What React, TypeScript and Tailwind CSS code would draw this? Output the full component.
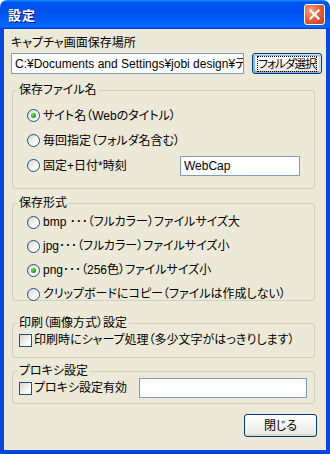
import type { ReactNode } from 'react'

function Radio({ checked }: { checked?: boolean }) {
  return (
    <span className="flex h-[13px] w-[13px] shrink-0 items-center justify-center rounded-full border border-[#1C5180] bg-[linear-gradient(135deg,#d8d5ca,#ffffff_75%)]">
      {checked && (
        <span className="h-[5px] w-[5px] rounded-full bg-[radial-gradient(circle_at_35%_35%,#6be46b,#21a121_60%,#137a13)]" />
      )}
    </span>
  )
}

function Check() {
  return (
    <span className="h-[13px] w-[13px] shrink-0 border border-[#1C5180] bg-[linear-gradient(135deg,#d8d5ca,#ffffff_80%)]" />
  )
}

type GroupProps = {
  title: string
  className: string
  children: ReactNode
}

function Group({ title, className, children }: GroupProps) {
  return (
    <div className={`relative ml-[8px] w-[303px] rounded-[3px] border border-[#D0D0BF] ${className}`}>
      <span className="absolute -top-[8px] left-[4px] bg-[#ECE9D8] px-[2px] leading-[14px]">{title}</span>
      {children}
    </div>
  )
}

function RadioRow({ label, checked, h }: { label: string; checked?: boolean; h: string }) {
  return (
    <div className={`flex items-center gap-[3px] pl-[14px] ${h}`}>
      <Radio checked={checked} />
      <span className="whitespace-nowrap leading-[14px]">{label}</span>
    </div>
  )
}

function XpButton({ label, focused, className }: { label: string; focused?: boolean; className: string }) {
  return (
    <div
      className={`flex items-center justify-center overflow-hidden rounded-[3px] border border-[#003C74] bg-[linear-gradient(180deg,#ffffff,#ecebe6_86%,#d6d0c5)] ${
        focused
          ? 'shadow-[inset_-1px_1px_#cee7ff,inset_1px_2px_#98b8ea,inset_-2px_2px_#bcd4f6,inset_1px_-1px_#89ade4,inset_2px_-2px_#89ade4]'
          : ''
      } ${className}`}
    >
      <span
        className={`whitespace-nowrap leading-[14px] ${
          focused ? 'border border-dotted border-black text-[11.5px] tracking-[-0.9px]' : ''
        }`}
      >
        {label}
      </span>
    </div>
  )
}

export default function App() {
  return (
    <div className="flex h-[454px] w-[330px] flex-col font-['Liberation_Sans','Noto_Sans_CJK_JP',sans-serif] text-[12px] text-black [font-feature-settings:'palt']">
      {/* title bar */}
      <div className="flex h-[29px] items-center justify-between rounded-t-[7px] bg-[linear-gradient(180deg,#0997ff,#0053ee_8%,#0050ee_40%,#0066ff_88%,#0066ff_93%,#005bff_95%,#003dd7_96%,#003dd7)] pl-[8px] pr-[5px]">
        <span className="font-['Noto_Sans_CJK_JP',sans-serif] text-[13px] font-bold tracking-[1px] text-white [text-shadow:1px_1px_#0f1089]">
          設定
        </span>
        <div className="flex h-[21px] w-[21px] items-center justify-center rounded-[3px] border border-white bg-[radial-gradient(circle_at_30%_30%,#f0a080,#e2643e_45%,#c43a18)]">
          <svg width="11" height="11" viewBox="0 0 11 11">
            <path d="M1.5 1.5 L9.5 9.5 M9.5 1.5 L1.5 9.5" stroke="white" strokeWidth="2.2" strokeLinecap="square" />
          </svg>
        </div>
      </div>

      {/* body */}
      <div className="flex flex-1 flex-col border-x-4 border-b-4 border-[#0747DB] bg-[#ECE9D8]">
        <div className="ml-[7px] mt-[7px] leading-[14px]">キャプチャ画面保存場所</div>

        <div className="mt-[3px] flex items-center">
          <div className="ml-[7px] flex h-[21px] w-[233px] items-center overflow-hidden whitespace-nowrap border border-[#7F9DB9] bg-white pl-[3px]">
            C:¥Documents and Settings¥jobi design¥デス
          </div>
          <XpButton label="フォルダ選択" focused className="ml-[8px] h-[21px] w-[70px]" />
        </div>

        <Group title="保存ファイル名" className="mt-[16px] h-[99px] pt-[12px]">
          <RadioRow label="サイト名（Webのタイトル）" checked h="h-[25px]" />
          <RadioRow label="毎回指定（フォルダ名含む）" h="h-[25px]" />
          <div className="flex h-[25px] items-center">
            <RadioRow label="固定+日付*時刻" h="h-[25px]" />
            <div className="ml-auto mr-[14px] flex h-[20px] w-[120px] items-center border border-[#7F9DB9] bg-white pl-[3px]">
              WebCap
            </div>
          </div>
        </Group>

        <Group title="保存形式" className="mt-[14px] h-[98px] pt-[6px]">
          <RadioRow label="bmp ･･･（フルカラー）ファイルサイズ大" h="h-[24px]" />
          <RadioRow label="jpg･･･（フルカラー）ファイルサイズ小" h="h-[24px]" />
          <RadioRow label="png･･･（256色）ファイルサイズ小" checked h="h-[24px]" />
          <RadioRow label="クリップボードにコピー（ファイルは作成しない）" h="h-[24px]" />
        </Group>

        <Group title="印刷（画像方式）設定" className="mt-[22px] h-[35px] pt-[6px]">
          <div className="flex h-[20px] items-center gap-[2px] pl-[6px]">
            <Check />
            <span className="whitespace-nowrap leading-[14px]">印刷時にシャープ処理（多少文字がはっきりします）</span>
          </div>
        </Group>

        <Group title="プロキシ設定" className="mt-[13px] h-[33px] pt-[6px]">
          <div className="flex h-[20px] items-center pl-[6px]">
            <Check />
            <span className="ml-[2px] leading-[14px]">プロキシ設定有効</span>
            <div className="ml-auto mr-[7px] h-[20px] w-[168px] border border-[#7F9DB9] bg-white" />
          </div>
        </Group>

        <XpButton label="閉じる" className="mr-[9px] mt-[10px] h-[23px] w-[73px] self-end" />
      </div>
    </div>
  )
}
